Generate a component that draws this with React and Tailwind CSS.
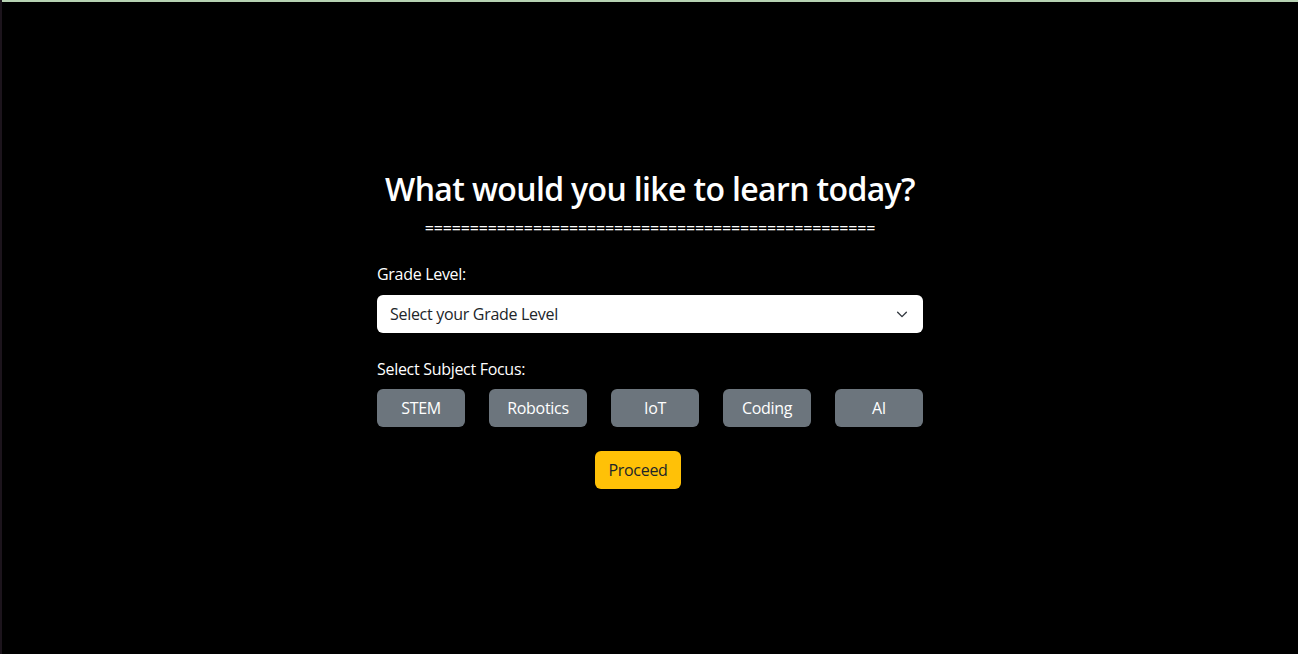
import React from "react";

export default function App() {
  const subjects = [
    { name: "STEM", w: "w-[88px]" },
    { name: "Robotics", w: "w-[98px]" },
    { name: "IoT", w: "w-[88px]" },
    { name: "Coding", w: "w-[88px]" },
    { name: "AI", w: "w-[88px]" },
  ];
  return (
    <div className="h-[654px] w-full bg-black flex font-['Open_Sans',sans-serif]">
      <div className="w-[2px] h-full bg-[#1c141c]" />
      <div className="flex-1 flex flex-col">
        <div className="h-[2px] bg-[#b7d2b3]" />
        <div className="flex flex-col items-center pt-[168px]">
          <h2 className="text-white text-[32px] font-semibold leading-[1.2] tracking-[-0.65px]">
            What would you like to learn today?
          </h2>
          <div className="text-white text-[16px] leading-[24px] mt-[8px] tracking-[-0.14px]">
            {"=".repeat(50)}
          </div>
          <div className="w-[546px] mt-[22px] flex flex-col">
            <label className="text-white text-[16px] leading-[24px] tracking-[-0.3px]">Grade Level:</label>
            <div className="mt-[9px] h-[38px] bg-white rounded-[6px] flex items-center justify-between pl-[13px] pr-[14px]">
              <span className="text-[#212529] text-[16px] tracking-[-0.3px]">Select your Grade Level</span>
              <svg width="14" height="14" viewBox="0 0 16 16" fill="none" stroke="#343a40" strokeWidth="1.6" strokeLinecap="round" strokeLinejoin="round">
                <path d="M3 6l5 5 5-5" />
              </svg>
            </div>
            <label className="text-white text-[16px] leading-[24px] mt-[24px] tracking-[-0.3px]">Select Subject Focus:</label>
            <div className="mt-[8px] flex justify-between">
              {subjects.map((s) => (
                <button
                  key={s.name}
                  className={`${s.w} h-[38px] rounded-[6px] bg-[#6c757d] text-white text-[16px] tracking-[-0.3px] flex items-center justify-center`}
                >
                  {s.name}
                </button>
              ))}
            </div>
            <div className="mt-[24px] flex pl-[218px]">
              <button className="w-[86px] h-[38px] rounded-[6px] bg-[#ffc107] text-[#212529] text-[16px] tracking-[-0.3px] flex items-center justify-center">
                Proceed
              </button>
            </div>
          </div>
        </div>
      </div>
    </div>
  );
}
